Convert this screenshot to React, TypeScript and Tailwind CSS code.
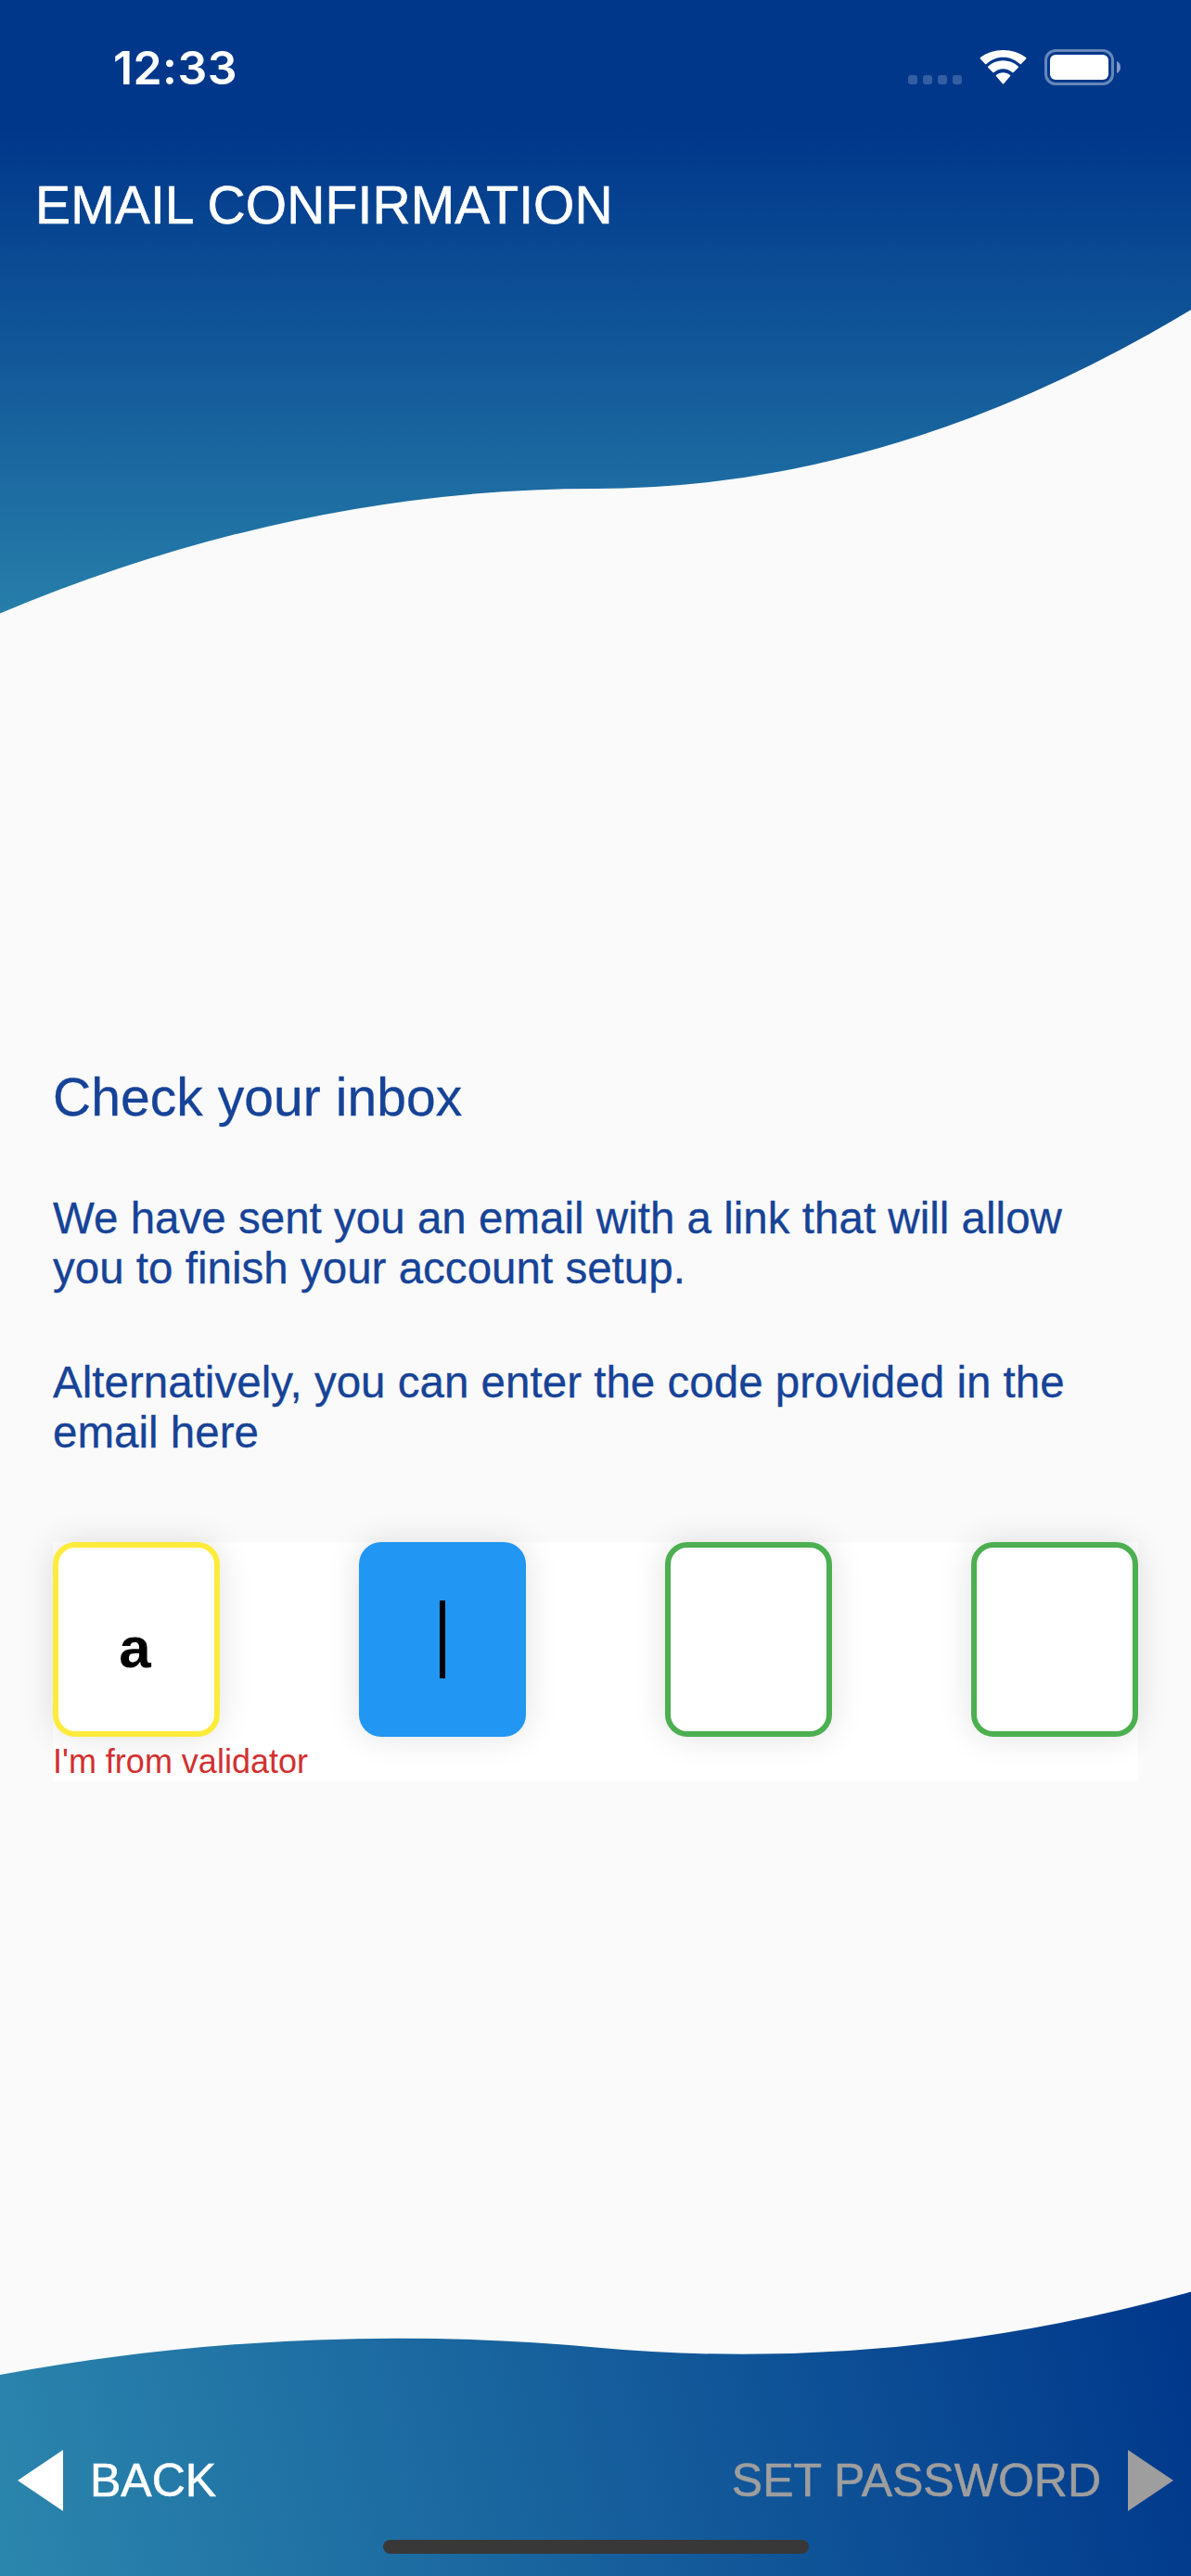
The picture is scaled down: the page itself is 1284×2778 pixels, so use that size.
import React from "react";

function HeaderWave() {
  return (
    <svg className="absolute left-0 top-0" width="1284" height="670" viewBox="0 0 1284 670" aria-hidden="true">
      <defs>
        <linearGradient id="header-fill" gradientUnits="userSpaceOnUse" x1="0" y1="141" x2="0" y2="720">
          <stop offset="0" stopColor="#00378b" />
          <stop offset="1" stopColor="#2b86ad" />
        </linearGradient>
      </defs>
      <path d="M0 0H1284V334Q963 527 642 527Q321 527 0 661.500Z" fill="url(#header-fill)" />
    </svg>
  );
}

function FooterWave() {
  return (
    <svg className="absolute left-0 top-0" width="1284" height="307" viewBox="0 0 1284 307" aria-hidden="true">
      <defs>
        <linearGradient id="footer-fill" gradientUnits="userSpaceOnUse" x1="0" y1="307" x2="1284" y2="0">
          <stop offset="0" stopColor="#2b86ad" />
          <stop offset="1" stopColor="#00378b" />
        </linearGradient>
      </defs>
      <path d="M0 90Q321 31 642 60.500Q963 90 1284 0.500V307H0Z" fill="url(#footer-fill)" />
    </svg>
  );
}

function StatusBar() {
  return (
    <div className="relative flex h-[141px] items-start justify-between pl-[122px] pr-[76px] text-white">
      <span className="mt-[43px] font-['Inter',sans-serif] text-[50px] font-semibold leading-[60px] tracking-[0.4px]">
        12:33
      </span>
      <div className="mt-[53px] flex h-[39px] items-start">
        <div className="mt-7 flex gap-1.5">
          {[0, 1, 2, 3].map((i) => (
            <span key={i} className="size-2.5 rounded-[3px] bg-white/20" />
          ))}
        </div>
        <svg className="ml-[19px] mt-px" width="51" height="37" viewBox="0 0 51 37" fill="white" aria-hidden="true">
          <path d="M25.500 7.700c6.800 0 13.200 2.600 18.100 7.300.4.400 1 .4 1.300 0l5.300-5.400-.1-.1c.4-.4.400-1 0-1.400C36.400-2.700 14.600-2.700.9 8.100c-.4.400-.4 1 0 1.400l5.200 5.500c.4.400 1 .4 1.300 0 4.900-4.700 11.300-7.300 18.100-7.300Z" />
          <path d="M25.500 20.200c3.600 0 7.100 1.400 9.800 3.800.4.400 1 .4 1.400 0l5-5.100c.4-.4.400-1 0-1.400-9.100-8.500-23.300-8.500-32.400 0-.4.400-.4 1 0 1.400l5 5.100c.4.400 1 .4 1.400 0 2.700-2.400 6.200-3.800 9.800-3.800Z" />
          <path d="M33 28.200c.4-.4.400-1 0-1.300-4.300-3.700-10.700-3.700-15 0-.4.300-.4.900 0 1.300l6.700 7.800c.4.600 1.200.6 1.600 0Z" />
        </svg>
        <div className="ml-[19px] flex items-center">
          <div className="h-[39px] w-[75px] rounded-[12px] border-[3px] border-white/40 p-[3px]">
            <div className="h-full rounded-[6px] bg-white" />
          </div>
          <svg className="ml-[3px]" width="4" height="13" viewBox="0 0 4 13" fill="white" fillOpacity="0.5" aria-hidden="true">
            <path d="M0 0C2.500 1 4 3.500 4 6.500S2.500 12 0 13Z" />
          </svg>
        </div>
      </div>
    </div>
  );
}

const cell =
  "flex h-[210px] w-[180px] items-center justify-center rounded-[24px] shadow-[0_0_36px_rgba(0,0,0,0.12)]";

function CodeEntry() {
  return (
    <div className="h-[258px] bg-white">
      <div className="flex justify-between">
        <div className={cell + " border-[6px] border-[#ffeb3b] bg-white"}>
          <span className="mr-[3px] mt-[18px] text-[62px] font-bold leading-[72px] text-black">a</span>
        </div>
        <div className={cell + " bg-[#2196f3]"}>
          <span className="h-[84px] w-1.5 bg-black" />
        </div>
        <div className={cell + " border-[6px] border-[#4caf50] bg-white"} />
        <div className={cell + " border-[6px] border-[#4caf50] bg-white"} />
      </div>
      <p className="relative pt-1.5 text-[36px] leading-[41px] text-[#d32f2f]">I'm from validator</p>
    </div>
  );
}

function Footer() {
  return (
    <footer className="relative mt-auto h-[307px]">
      <FooterWave />
      <div className="relative flex items-center justify-between px-[19px] pt-[171px] text-[50px] leading-[66px]">
        <button className="flex items-center gap-[29px] text-white">
          <svg width="49" height="66" viewBox="0 0 49 66" fill="currentColor" aria-hidden="true">
            <path d="M0 33 49 0V66Z" />
          </svg>
          <span className="[-webkit-text-stroke:0.6px]">BACK</span>
        </button>
        <button className="flex items-center gap-[29px] text-[#9e9e9e]">
          <span className="[-webkit-text-stroke:0.6px]">SET PASSWORD</span>
          <svg width="49" height="66" viewBox="0 0 49 66" fill="currentColor" aria-hidden="true">
            <path d="M49 33 0 0V66Z" />
          </svg>
        </button>
      </div>
      <div className="relative mx-auto mt-[31px] h-[15px] w-[459px] rounded-full bg-[#383838]" />
    </footer>
  );
}

export default function App() {
  return (
    <div className="relative flex h-[2778px] w-[1284px] flex-col overflow-hidden bg-[#fafafa] font-['Liberation_Sans',Arial,sans-serif]">
      <HeaderWave />
      <StatusBar />
      <header className="relative mt-[47px] pl-[38px]">
        <h1 className="text-[57px] leading-[66px] tracking-[0.12px] text-white [-webkit-text-stroke:0.6px]">
          EMAIL CONFIRMATION
        </h1>
      </header>
      <main className="relative mt-[896px] px-[57px] text-[#164397]">
        <h2 className="text-[57px] leading-[66px] tracking-[0.05px] [-webkit-text-stroke:0.3px]">Check your inbox</h2>
        <p className="mt-[71px] text-[47.5px] leading-[54.3px] tracking-[0.02px] [-webkit-text-stroke:0.3px]">
          We have sent you an email with a link that will allow
          <br />
          you to finish your account setup.
        </p>
        <p className="mt-[68.4px] mb-[90.4px] text-[47.5px] leading-[54.3px] tracking-[0.02px] [-webkit-text-stroke:0.3px]">
          Alternatively, you can enter the code provided in the
          <br />
          email here
        </p>
        <CodeEntry />
      </main>
      <Footer />
    </div>
  );
}
